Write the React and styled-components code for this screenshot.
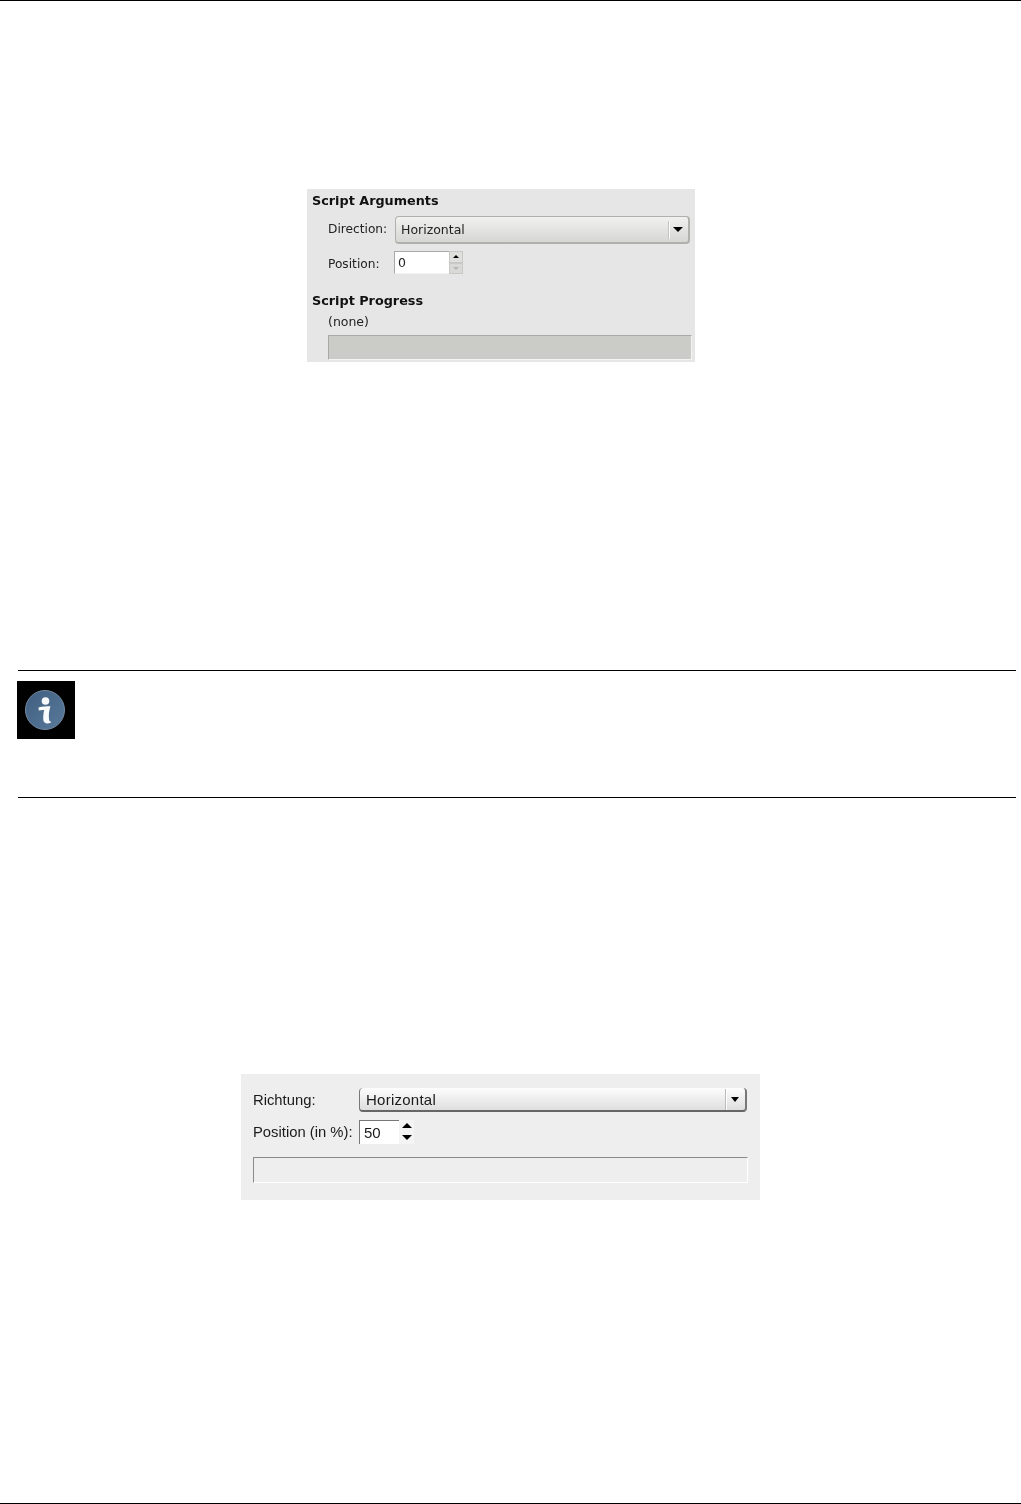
import React from 'react';
import styled, {createGlobalStyle} from 'styled-components';

const GlobalStyle = createGlobalStyle`
    html, body {
        margin: 0;
        padding: 0;
        background: #fff;
    }
`;

const Page = styled.div`
    width: 1021px;
    height: 1504px;
    box-sizing: border-box;
    border-top: 1px solid #000;
    border-bottom: 1px solid #000;
    overflow: hidden;
    display: flex;
    flex-direction: column;
    align-items: flex-start;
`;

const Figure = styled.div`
    width: ${props => props.width}px;
    height: ${props => props.height}px;
    margin-top: ${props => props.top}px;
    margin-left: ${props => props.left}px;
    box-sizing: border-box;
    flex: none;
    background: ${props => props.bg};
    filter: blur(0.4px);
`;

const GimpPanel = styled(Figure)`
    padding: 4px 3px 0 5px;
    font-family: "DejaVu Sans", sans-serif;
    font-size: 12.5px;
    color: #222;
`;

const Heading = styled.div`
    font-weight: bold;
    font-size: 12.8px;
    line-height: 15px;
    height: 15px;
    margin-top: ${props => props.top || 0}px;
    color: #111;
`;

const Row = styled.div`
    display: flex;
    align-items: center;
    height: ${props => props.height}px;
    margin-top: ${props => props.top}px;
    margin-left: ${props => props.indent}px;
`;

const Label = styled.span`
    width: ${props => props.width}px;
    flex: none;
    padding-top: ${props => props.down || 0}px;
    padding-bottom: ${props => props.up || 0}px;
    font-size: ${props => props.size ? `${props.size}px` : 'inherit'};
`;

const Combo = styled.div`
    flex: 1;
    height: 100%;
    margin-right: 2px;
    box-sizing: border-box;
    display: flex;
    align-items: center;
    border: 1px solid #b0b0ad;
    border-right-width: 2px;
    border-bottom-width: 2px;
    border-radius: 4px;
    background: linear-gradient(#f1f1f0, #d6d6d4);
    padding-left: 5px;
`;

const ComboText = styled.span`
    flex: 1;
    letter-spacing: ${props => props.spacing || 0}px;
`;

const ComboSep = styled.span`
    width: 1px;
    height: 18px;
    background: #fafafa;
    border-left: 1px solid #c4c4c1;
`;

const ComboArrow = styled.span`
    width: 0;
    height: 0;
    margin: 0 5px 0 3px;
    border-left: 5px solid transparent;
    border-right: 5px solid transparent;
    border-top: 5px solid #000;
`;

const SpinEntry = styled.div`
    width: 55px;
    height: 100%;
    box-sizing: border-box;
    border: 1px solid #a8a8a5;
    border-right: none;
    border-bottom-color: #f2f2f2;
    background: #fff;
    padding-left: 3px;
    display: flex;
    align-items: center;
`;

const SpinButtons = styled.div`
    width: 14px;
    height: 100%;
    display: flex;
    flex-direction: column;
`;

const SpinButton = styled.div`
    flex: 1;
    display: flex;
    align-items: center;
    justify-content: center;
    background: ${props => props.off ? '#d9d9d7' : '#dfdfdd'};
    border: 1px solid #c8c8c5;
`;

const Triangle = styled.span`
    width: 0;
    height: 0;
    border-left: ${props => props.size}px solid transparent;
    border-right: ${props => props.size}px solid transparent;
    ${props => props.up ? 'border-bottom' : 'border-top'}: ${props => props.size}px solid ${props => props.color};
`;

const ProgressLabel = styled.div`
    margin-top: 7px;
    margin-left: 16px;
    height: 14px;
    line-height: 14px;
`;

const GimpProgress = styled.div`
    height: 25px;
    margin-top: 6px;
    margin-left: 16px;
    box-sizing: border-box;
    background: #cbccc8;
    border: 1px solid #a9aaa6;
    border-right-color: #f4f4f4;
    border-bottom-color: #f4f4f4;
`;

const Note = styled.div`
    width: 998px;
    height: 128px;
    flex: none;
    margin-top: 308px;
    margin-left: 18px;
    box-sizing: border-box;
    border-top: 1px solid #000;
    border-bottom: 1px solid #000;
`;

const NoteIcon = styled.svg`
    display: block;
    width: 58px;
    height: 58px;
    margin-top: 10px;
    margin-left: -1px;
`;

const PythonPanel = styled(Figure)`
    padding: 14px 12px 0 12px;
    font-family: "Liberation Sans", sans-serif;
    font-size: 15px;
    color: #1a1a1a;
`;

const PyCombo = styled.div`
    flex: 1;
    height: 100%;
    box-sizing: border-box;
    display: flex;
    align-items: center;
    border-left: 1px solid #777;
    border-right: 2px solid #777;
    border-bottom: 2px solid #666;
    border-radius: 4px;
    background: linear-gradient(#fdfdfd, #dedede);
    padding-left: 6px;
    margin-right: 1px;
`;

const PySep = styled.span`
    width: 1px;
    height: 21px;
    background: #bbb;
    border-right: 1px solid #fff;
`;

const PyArrow = styled.span`
    width: 0;
    height: 0;
    margin: 0 6px 0 4px;
    border-left: 4.5px solid transparent;
    border-right: 4.5px solid transparent;
    border-top: 5px solid #000;
`;

const PyEntry = styled.div`
    width: 40px;
    height: 100%;
    box-sizing: border-box;
    background: #fff;
    border-left: 1px solid #777;
    border-top: 1px solid #777;
    padding-left: 4px;
    display: flex;
    align-items: center;
`;

const PyArrows = styled.div`
    width: 15px;
    height: 100%;
    box-sizing: border-box;
    padding-bottom: 2px;
    background: #f4f4f4;
    display: flex;
    flex-direction: column;
    justify-content: center;
    align-items: center;
    gap: 7px;
`;

const PyProgress = styled.div`
    height: 26px;
    margin-top: 13px;
    box-sizing: border-box;
    border: 1px solid #8a8a8a;
    border-right-color: #fff;
    border-bottom-color: #fff;
`;

const InfoIcon = () => (
    <NoteIcon viewBox='0 0 58 58'>
        <defs>
            <linearGradient id='disc' x1='0' y1='0' x2='1' y2='1'>
                <stop offset='0' stopColor='#3f5e80' />
                <stop offset='1' stopColor='#5a7a9b' />
            </linearGradient>
        </defs>
        <rect width='58' height='58' fill='#000' />
        <circle cx='28' cy='29' r='19.5' fill='url(#disc)' stroke='#7389a2' strokeWidth='1' />
        <circle cx='28.5' cy='20' r='3.8' fill='#f8fafb' />
        <path
            d='M21.5 26.5 C25 25.2 29.5 25.2 33.5 25.2 C32 29.5 31.5 34 32 38 C32.2 40 33 40.8 34 40.6 L33.8 41.8 C30 43.4 26.6 42.6 26.3 38.8 C26 35 26.6 31.5 27.2 29 C25.5 28.8 23.5 29 21.8 29.6 Z'
            fill='#f8fafb' />
    </NoteIcon>
);

const App = () => (
    <Page>
        <GlobalStyle />
        <GimpPanel width={388} height={173} top={188} left={307} bg='#e6e6e6'>
            <Heading>Script Arguments</Heading>
            <Row indent={16} height={28} top={8}>
                <Label width={67} size={12.2} up={2}>Direction:</Label>
                <Combo>
                    <ComboText>Horizontal</ComboText>
                    <ComboSep />
                    <ComboArrow />
                </Combo>
            </Row>
            <Row indent={16} height={23} top={7}>
                <Label width={66} size={12.2} down={2}>Position:</Label>
                <SpinEntry>0</SpinEntry>
                <SpinButtons>
                    <SpinButton><Triangle up size={3} color='#000' /></SpinButton>
                    <SpinButton off><Triangle size={3} color='#b5b5b3' /></SpinButton>
                </SpinButtons>
            </Row>
            <Heading top={19}>Script Progress</Heading>
            <ProgressLabel>(none)</ProgressLabel>
            <GimpProgress />
        </GimpPanel>
        <Note>
            <InfoIcon />
        </Note>
        <PythonPanel width={519} height={126} top={276} left={241} bg='#eeeeee'>
            <Row indent={0} height={24} top={0}>
                <Label width={106} size={14.8} up={1}>Richtung:</Label>
                <PyCombo>
                    <ComboText spacing={0.25}>Horizontal</ComboText>
                    <PySep />
                    <PyArrow />
                </PyCombo>
            </Row>
            <Row indent={0} height={24} top={8}>
                <Label width={106} size={14.8} up={1}>Position (in %):</Label>
                <PyEntry>50</PyEntry>
                <PyArrows>
                    <Triangle up size={5} color='#000' />
                    <Triangle size={5} color='#000' />
                </PyArrows>
            </Row>
            <PyProgress />
        </PythonPanel>
    </Page>
);

export default App;
